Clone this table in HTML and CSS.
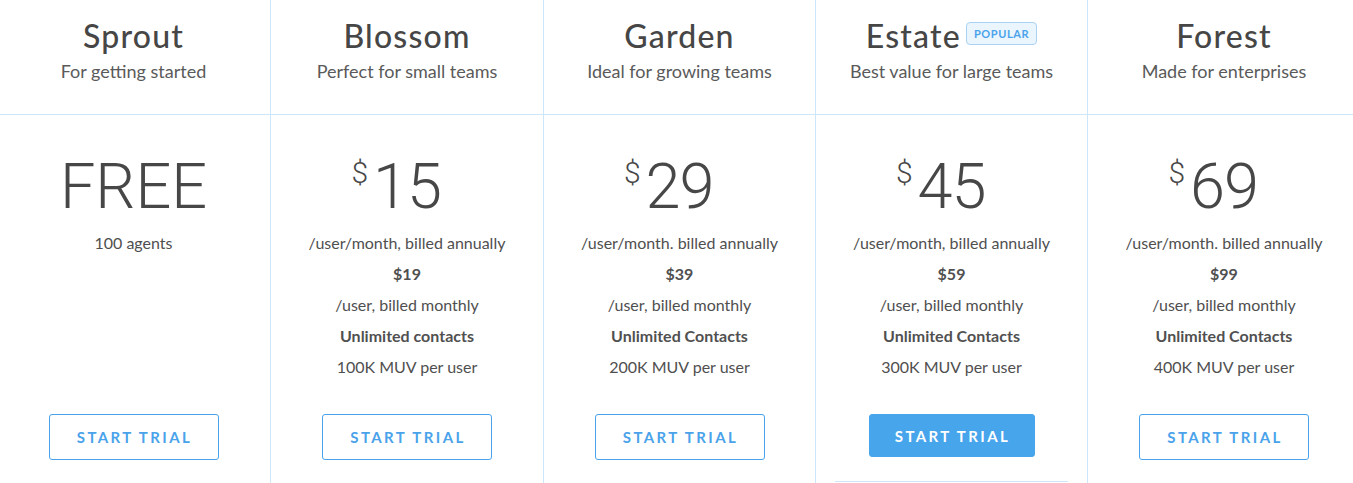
FILE: index.html
```
<!DOCTYPE html>
<html>
<head>
<meta charset="utf-8">
<link rel="stylesheet" href="styles.css">
</head>
<body>
<div class="plans">
  <div class="plan">
    <div class="plan-head">
      <div class="title-row"><h2 class="title">Sprout</h2></div>
      <p class="tagline">For getting started</p>
    </div>
    <div class="plan-body">
      <div class="price"><span class="free">FREE</span></div>
      <div class="details">
        <p class="line">100 agents</p>
      </div>
      <div class="action"><a class="btn">START TRIAL</a></div>
    </div>
  </div>
  <div class="plan">
    <div class="plan-head">
      <div class="title-row"><h2 class="title">Blossom</h2></div>
      <p class="tagline">Perfect for small teams</p>
    </div>
    <div class="plan-body">
      <div class="price"><span class="amount"><span class="cur">$</span>15</span></div>
      <div class="details">
        <p class="line">/user/month, billed annually</p>
        <p class="line strong">$19</p>
        <p class="line">/user, billed monthly</p>
        <p class="line strong">Unlimited contacts</p>
        <p class="line">100K MUV per user</p>
      </div>
      <div class="action"><a class="btn">START TRIAL</a></div>
    </div>
  </div>
  <div class="plan">
    <div class="plan-head">
      <div class="title-row"><h2 class="title">Garden</h2></div>
      <p class="tagline">Ideal for growing teams</p>
    </div>
    <div class="plan-body">
      <div class="price"><span class="amount"><span class="cur">$</span>29</span></div>
      <div class="details">
        <p class="line">/user/month. billed annually</p>
        <p class="line strong">$39</p>
        <p class="line">/user, billed monthly</p>
        <p class="line strong">Unlimited Contacts</p>
        <p class="line">200K MUV per user</p>
      </div>
      <div class="action"><a class="btn">START TRIAL</a></div>
    </div>
  </div>
  <div class="plan featured">
    <div class="plan-head">
      <div class="title-row"><h2 class="title">Estate</h2><span class="badge">POPULAR</span></div>
      <p class="tagline">Best value for large teams</p>
    </div>
    <div class="plan-body">
      <div class="price"><span class="amount"><span class="cur">$</span>45</span></div>
      <div class="details">
        <p class="line">/user/month, billed annually</p>
        <p class="line strong">$59</p>
        <p class="line">/user, billed monthly</p>
        <p class="line strong">Unlimited Contacts</p>
        <p class="line">300K MUV per user</p>
      </div>
      <div class="action"><a class="btn btn-primary">START TRIAL</a></div>
      <div class="foot-rule"></div>
    </div>
  </div>
  <div class="plan">
    <div class="plan-head">
      <div class="title-row"><h2 class="title">Forest</h2></div>
      <p class="tagline">Made for enterprises</p>
    </div>
    <div class="plan-body">
      <div class="price"><span class="amount"><span class="cur">$</span>69</span></div>
      <div class="details">
        <p class="line">/user/month. billed annually</p>
        <p class="line strong">$99</p>
        <p class="line">/user, billed monthly</p>
        <p class="line strong">Unlimited Contacts</p>
        <p class="line">400K MUV per user</p>
      </div>
      <div class="action"><a class="btn">START TRIAL</a></div>
    </div>
  </div>
</div>
</body>
</html>
```
FILE: styles.css
```
* { box-sizing: border-box; }
html, body { margin: 0; padding: 0; background: #fff; }
body {
  font-family: "Lato", "Open Sans", sans-serif;
  color: #4a4a4a;
  width: 1353px;
  height: 483px;
  overflow: hidden;
}
.plans {
  display: grid;
  grid-template-columns: 274px 273px 272px 272px 272px;
  margin-left: -3px;
  height: 483px;
}
.plan {
  border-right: 1px solid #cde6fa;
  display: flex;
  flex-direction: column;
  text-align: center;
}
.plan:last-child { border-right: none; }
.plan-head {
  height: 115px;
  border-bottom: 1px solid #cde6fa;
  padding-top: 13px;
}
.title-row {
  display: flex;
  justify-content: center;
  align-items: center;
  gap: 5px;
  height: 44px;
}
.title {
  margin: 0;
  font-family: "Lato", "Open Sans", sans-serif;
  font-weight: 500;
  font-size: 32px;
  letter-spacing: 1.2px;
  color: #464646;
}
.badge {
  display: inline-block;
  margin-top: -4px;
  height: 23px;
  line-height: 21px;
  padding: 0 7px;
  border: 1px solid #a9d3f5;
  border-radius: 4px;
  background: #eaf5fe;
  color: #4aa3ea;
  font-weight: 700;
  font-size: 11px;
  letter-spacing: 0.6px;
}
.tagline {
  margin: 0;
  font-size: 18px;
  color: #5a5a5a;
  line-height: 28px;
}
.plan-body {
  flex: 1;
  display: flex;
  flex-direction: column;
  align-items: center;
  padding-top: 40px;
}
.price {
  height: 73px;
  display: flex;
  justify-content: center;
  align-items: flex-start;
  font-family: "Roboto", sans-serif;
  font-weight: 300;
  color: #474747;
  line-height: 1;
}
.free { font-size: 63px; }
.amount { position: relative; font-size: 63px; letter-spacing: -1px; }
.cur {
  position: absolute;
  right: 100%;
  top: 3px;
  margin-right: 5px;
  font-size: 30px;
  letter-spacing: 0;
}
.details { height: 186px; }
.line {
  margin: 0;
  font-size: 16px;
  line-height: 30px;
  color: #4f4f4f;
  height: 31px;
}
.strong { font-weight: 700; color: #505050; }
.action { display: flex; justify-content: center; }
.btn {
  display: inline-flex;
  align-items: center;
  justify-content: center;
  width: 170px;
  height: 46px;
  padding-left: 2px;
  border: 1px solid #4aa3ea;
  border-radius: 3px;
  color: #4aa3ea;
  font-weight: 700;
  font-size: 15px;
  letter-spacing: 2.4px;
  text-decoration: none;
}
.btn-primary {
  width: 166px;
  height: 43px;
  background: #47a5ec;
  border-color: #47a5ec;
  color: #fff;
}
.foot-rule {
  margin-top: 24px;
  width: 233px;
  border-top: 1px solid #cde6fa;
}
```
